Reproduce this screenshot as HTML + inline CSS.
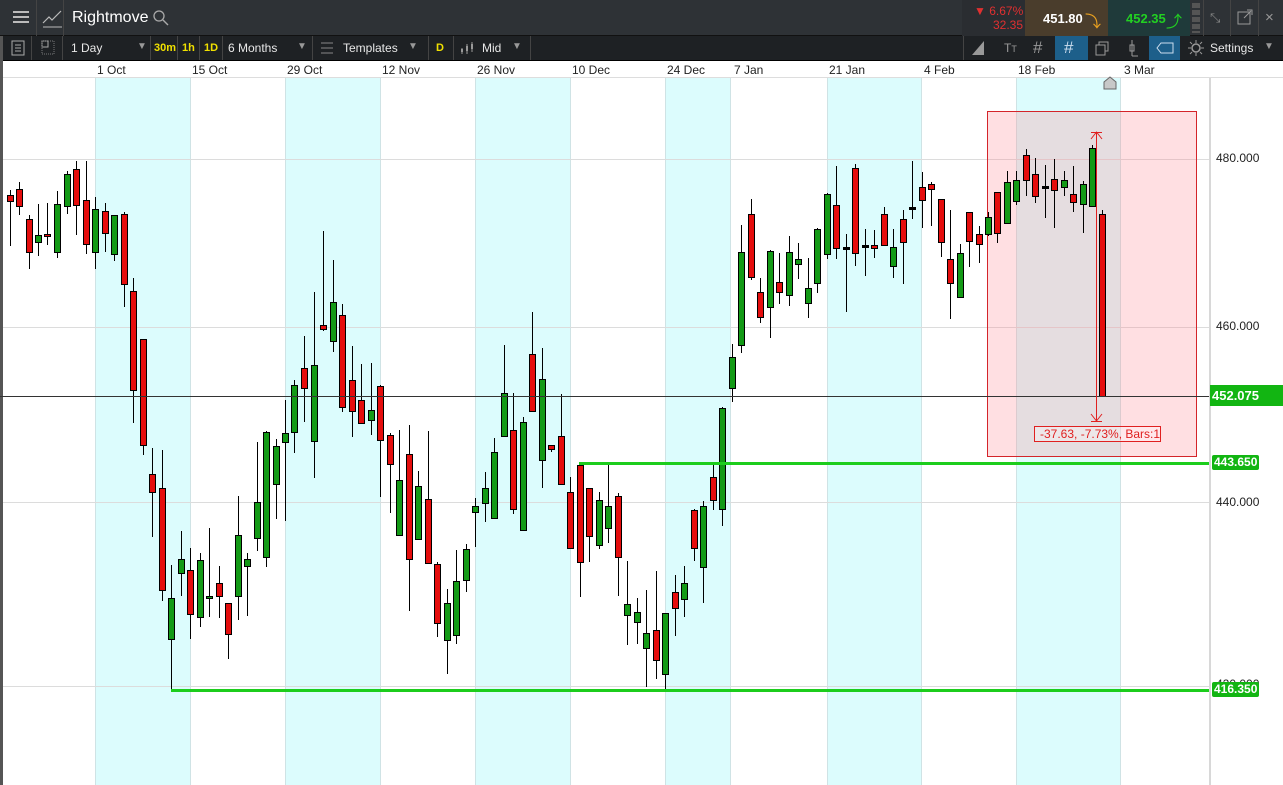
<!DOCTYPE html>
<html><head><meta charset="utf-8"><style>
*{margin:0;padding:0;box-sizing:border-box}
body{width:1283px;height:785px;overflow:hidden;background:#fff;font-family:"Liberation Sans",sans-serif;position:relative}
.top{position:absolute;left:0;top:0;width:1283px;height:36px;background:#2e3236;border-bottom:1px solid #111}
.tb{position:absolute;left:0;top:36px;width:1283px;height:25px;background:#1e2124;border-bottom:1px solid #000}
.t{position:absolute;color:#e8e8e8;font-size:12px;white-space:nowrap}
.y{color:#f0e000;font-weight:bold;font-size:11px}
.sep{position:absolute;width:1px;background:#444}
.dates{position:absolute;left:0;top:61px;width:1283px;height:17px;background:#fff;border-bottom:1px solid #ddd}
.dates span{position:absolute;top:2px;font-size:12px;color:#222}
svg{position:absolute;left:0;top:0}
.lab{position:absolute;color:#fff;font-weight:bold;background:#12b512;font-size:12px;padding:0 2px;border-radius:2px}
.ax{position:absolute;left:1216px;font-size:12px;color:#222}
</style></head><body>
<div class="top">
 <div style="position:absolute;left:13px;top:11px;width:16px;height:2px;background:#bbb;box-shadow:0 5px 0 #bbb,0 10px 0 #bbb"></div>
 <div class="sep" style="left:36px;top:0;height:36px"></div>
 <svg width="30" height="36" style="left:38px"><path d="M5 23 L11 17 L14 20 L23 11" stroke="#bbb" fill="none" stroke-width="1.2"/><path d="M5 27 H24" stroke="#bbb"/></svg>
 <div class="sep" style="left:63px;top:0;height:36px"></div>
 <div class="t" style="left:72px;top:9px;font-size:16px;color:#fff">Rightmove</div>
 <svg width="20" height="36" style="left:151px"><circle cx="8" cy="16" r="5" stroke="#aaa" fill="none" stroke-width="1.3"/><path d="M12 20 L17 25" stroke="#aaa" stroke-width="1.4"/></svg>
 <div style="position:absolute;left:962px;top:0;width:63px;height:36px;background:#2a2d31"></div>
 <div class="t" style="left:974px;top:4px;color:#e03030;font-size:12px">▼ 6.67%</div>
 <div class="t" style="left:993px;top:18px;color:#e03030;font-size:12px">32.35</div>
 <div style="position:absolute;left:1025px;top:0;width:83px;height:36px;background:#4a3d2c"></div>
 <div class="t" style="left:1043px;top:11px;color:#fff;font-weight:bold;font-size:13px">451.80</div>
 <div class="t" style="left:1085px;top:8px;color:#e8a020;font-size:16px">⤵</div>
 <div style="position:absolute;left:1108px;top:0;width:82px;height:36px;background:#1f3a3a"></div>
 <div class="t" style="left:1126px;top:11px;color:#22d022;font-weight:bold;font-size:13px">452.35</div>
 <div class="t" style="left:1166px;top:8px;color:#22d022;font-size:16px">⤴</div>
 <div style="position:absolute;left:1192px;top:3px;width:8px;height:30px;background:repeating-linear-gradient(#555 0 5px,#2e3236 5px 7px)"></div>
 <div class="sep" style="left:1203px;top:0;height:36px"></div>
 <div class="t" style="left:1210px;top:10px;color:#888;font-size:13px">⤡</div>
 <div class="sep" style="left:1230px;top:0;height:36px"></div>
 <svg width="20" height="36" style="left:1236px"><rect x="2" y="12" width="12" height="12" stroke="#999" fill="none"/><path d="M8 18 L15 11 M11 10 H16 V15" stroke="#999" fill="none"/></svg>
 <div class="sep" style="left:1258px;top:0;height:36px"></div>
 <div class="t" style="left:1265px;top:9px;color:#999;font-size:15px">×</div>
</div>
<div class="tb">
 <svg width="20" height="24" style="left:10px"><rect x="2" y="5" width="12" height="14" stroke="#aaa" fill="none"/><path d="M5 9H11M5 12H11M5 15H11" stroke="#aaa"/></svg>
 <div class="sep" style="left:31px;top:0;height:24px"></div>
 <svg width="20" height="24" style="left:40px"><rect x="2" y="5" width="6" height="6" stroke="#aaa" fill="none"/><rect x="2" y="5" width="12" height="13" stroke="#777" fill="none" stroke-dasharray="1 1"/></svg>
 <div class="sep" style="left:62px;top:0;height:24px"></div>
 <div class="t" style="left:71px;top:5px">1 Day</div>
 <div class="t" style="left:137px;top:5px;color:#999;font-size:10px">▼</div>
 <div class="sep" style="left:150px;top:0;height:24px"></div>
 <div class="t y" style="left:154px;top:6px">30m</div>
 <div class="sep" style="left:177px;top:0;height:24px"></div>
 <div class="t y" style="left:182px;top:6px">1h</div>
 <div class="sep" style="left:199px;top:0;height:24px"></div>
 <div class="t y" style="left:204px;top:6px">1D</div>
 <div class="sep" style="left:222px;top:0;height:24px"></div>
 <div class="t" style="left:228px;top:5px">6 Months</div>
 <div class="t" style="left:297px;top:5px;color:#999;font-size:10px">▼</div>
 <div class="sep" style="left:312px;top:0;height:24px"></div>
 <svg width="20" height="24" style="left:318px"><path d="M3 7H15M3 12H15M3 17H15" stroke="#888"/></svg>
 <div class="t" style="left:343px;top:5px">Templates</div>
 <div class="t" style="left:408px;top:5px;color:#999;font-size:10px">▼</div>
 <div class="sep" style="left:428px;top:0;height:24px"></div>
 <div class="t y" style="left:436px;top:6px">D</div>
 <div class="sep" style="left:453px;top:0;height:24px"></div>
 <svg width="22" height="24" style="left:458px"><path d="M4 12V18M9 8V18M14 6V16" stroke="#999"/><rect x="3" y="13" width="2" height="3" fill="#999"/><rect x="8" y="10" width="2" height="5" fill="#999"/><rect x="13" y="8" width="2" height="5" fill="#999"/></svg>
 <div class="t" style="left:482px;top:5px">Mid</div>
 <div class="t" style="left:512px;top:5px;color:#999;font-size:10px">▼</div>
 <div class="sep" style="left:530px;top:0;height:24px"></div>
 <div class="sep" style="left:963px;top:0;height:24px"></div>
 <svg width="20" height="24" style="left:968px"><path d="M4 19H16V5Z" fill="#999"/></svg>
 <div class="t" style="left:1004px;top:5px;color:#999">T<span style="font-size:9px">T</span></div>
 <div class="t" style="left:1033px;top:2px;color:#999;font-size:17px">#</div>
 <div style="position:absolute;left:1055px;top:0;width:33px;height:24px;background:#1d5f8a"></div>
 <div class="t" style="left:1064px;top:2px;color:#cde;font-size:17px">#</div>
 <svg width="20" height="24" style="left:1093px"><rect x="3" y="9" width="9" height="10" stroke="#999" fill="none"/><path d="M6 9V6H15V15H12" stroke="#999" fill="none"/></svg>
 <svg width="20" height="24" style="left:1124px"><path d="M8 4V20M8 20H14" stroke="#999"/><rect x="6" y="9" width="4" height="6" stroke="#999" fill="none"/></svg>
 <div style="position:absolute;left:1149px;top:0;width:31px;height:24px;background:#1d5f8a"></div>
 <svg width="24" height="24" style="left:1153px"><path d="M8 7H20V17H8L4 12Z" stroke="#cde" fill="none"/></svg>
 <svg width="20" height="24" style="left:1186px"><circle cx="10" cy="12" r="4" stroke="#999" fill="none" stroke-width="1.5"/><path d="M10 4V7M10 17V20M2 12H5M15 12H18M4 6L6 8M14 16L16 18M4 18L6 16M14 8L16 6" stroke="#999"/></svg>
 <div class="t" style="left:1210px;top:5px">Settings</div>
 <div class="t" style="left:1264px;top:5px;color:#999;font-size:10px">▼</div>
</div>
<div class="dates">
 <span style="left:97px">1 Oct</span><span style="left:192px">15 Oct</span><span style="left:287px">29 Oct</span><span style="left:382px">12 Nov</span><span style="left:477px">26 Nov</span><span style="left:572px">10 Dec</span><span style="left:667px">24 Dec</span><span style="left:734px">7 Jan</span><span style="left:829px">21 Jan</span><span style="left:924px">4 Feb</span><span style="left:1018px">18 Feb</span><span style="left:1124px">3 Mar</span>
</div>
<svg id="c" width="1283" height="785"></svg>
<div class="ax" style="top:151px">480.000</div>
<div class="ax" style="top:319px">460.000</div>
<div class="ax" style="top:495px">440.000</div>
<div class="ax" style="top:677px">420.000</div>
<div class="lab" style="left:1210px;top:385px;width:73px;height:21px;font-size:13px;line-height:21px;padding-left:2px;border-radius:0">452.075</div>
<div class="lab" style="left:1212px;top:455px;height:15px;line-height:15px">443.650</div>
<div class="lab" style="left:1212px;top:682px;height:15px;line-height:15px">416.350</div>
<script>
var s='';
function r(x,y,w,h,f,e){s+='<rect x="'+x+'" y="'+y+'" width="'+w+'" height="'+h+'" fill="'+f+'"'+(e?' stroke="'+e+'"':'')+'/>';}
function l(x1,y1,x2,y2,c,w){s+='<line x1="'+x1+'" y1="'+y1+'" x2="'+x2+'" y2="'+y2+'" stroke="'+c+'" stroke-width="'+(w||1)+'"/>';}
r(0,78,1210,707,'#fff');
[[95,190],[285,380],[475,570],[665,730],[827,921],[1016,1120]].forEach(b=>r(b[0],78,b[1]-b[0],707,'#dcfcfd'));
[95,190,285,380,475,570,665,730,827,921,1016,1120].forEach(x=>l(x+.5,78,x+.5,785,'#cfe3e5'));
[159,327,502,686].forEach(y=>l(0,y+.5,1210,y+.5,'#dcdcdc'));
r(0,36,3,749,'#555');
r(987.5,111.5,209,345,'rgba(255,140,150,0.28)','#d4242a');
var C=[
[10,195,201,190,246,'r'],[19,189,206,182,215,'r'],[29,219,252,215,269,'r'],[38,235,242,204,256,'g'],[47,234,236,203,245,'r'],[57,204,252,191,258,'g'],[67,174,206,171,214,'g'],[76,169,205,161,235,'r'],[86,200,244,161,254,'r'],[95,209,252,197,269,'g'],[105,211,233,203,252,'r'],[114,215,254,215,261,'g'],[124,214,284,212,307,'r'],[133,291,390,278,423,'r'],[143,339,445,339,455,'r'],[152,474,492,448,537,'r'],[162,488,590,450,601,'r'],[171,598,639,565,690,'g'],[181,559,573,531,596,'g'],[190,570,614,548,639,'r'],[200,560,617,553,627,'g'],[209,596,598,528,617,'g'],[219,583,596,566,618,'r'],[228,603,634,603,659,'r'],[238,535,596,496,620,'g'],[247,559,566,553,616,'g'],[257,502,538,442,551,'g'],[266,432,557,431,567,'g'],[276,446,484,439,519,'g'],[285,433,442,400,521,'g'],
[294,385,432,380,453,'g'],[304,368,388,336,422,'r'],[314,365,441,292,478,'g'],[323,325,329,231,331,'r'],[333,302,341,260,352,'g'],[342,315,407,304,412,'r'],[352,380,411,346,437,'r'],[361,400,423,364,424,'r'],[371,410,420,363,435,'g'],[380,386,440,385,497,'r'],[390,435,464,433,513,'r'],[399,480,535,430,536,'g'],[409,454,559,425,611,'r'],[418,486,539,471,539,'g'],[428,499,563,431,563,'r'],[437,564,623,562,637,'r'],[447,603,640,589,674,'g'],[456,581,635,550,644,'g'],[466,549,580,544,592,'g'],[475,506,512,498,547,'g'],[485,488,503,472,522,'g'],[494,452,518,438,519,'g'],[504,393,436,345,436,'g'],[513,430,509,393,514,'r'],[523,422,530,417,530,'g'],[532,354,411,312,412,'r'],[542,379,460,348,488,'g'],[551,445,449,445,452,'r'],[561,436,484,394,484,'r'],
[570,492,548,477,548,'r'],[580,465,562,465,597,'r'],[589,488,536,488,562,'r'],[599,500,545,492,549,'g'],[608,506,528,465,543,'g'],[618,496,557,493,596,'r'],[627,604,615,561,645,'g'],[637,612,622,598,644,'g'],[646,633,648,590,687,'g'],[656,630,660,571,679,'r'],[665,613,674,613,690,'g'],[675,592,608,575,636,'r'],[684,583,599,566,617,'g'],[694,510,548,509,561,'r'],[703,506,567,501,603,'g'],[713,477,500,465,510,'r'],[722,408,509,407,526,'g'],[732,357,388,344,402,'g'],[741,252,345,225,353,'g'],[751,214,277,199,280,'r'],
[760,292,317,278,323,'r'],[770,251,307,250,338,'g'],[779,282,292,253,304,'r'],[789,252,295,236,306,'g'],[798,259,264,243,279,'g'],[808,288,303,258,318,'g'],[817,229,283,228,293,'g'],[827,194,254,193,259,'g'],[836,205,248,166,259,'r'],[846,247,249,234,312,'k'],[855,168,253,164,266,'r'],[865,245,247,229,276,'k'],[874,245,248,230,258,'r'],[884,214,245,207,245,'r'],[893,247,266,229,278,'g'],[903,219,242,210,284,'r'],[912,207,209,161,219,'k'],[922,187,200,172,228,'r'],[931,184,189,182,226,'r'],[941,199,242,199,257,'r'],[950,259,283,210,319,'r'],[960,253,297,244,297,'g'],[969,212,241,212,267,'r'],[979,234,244,226,263,'r'],[988,217,234,212,236,'g'],[997,192,233,192,243,'r'],[1007,182,223,171,223,'g'],[1016,180,201,171,205,'g'],[1026,155,180,149,196,'r'],[1035,174,196,158,203,'r'],[1045,186,188,165,218,'k'],[1054,179,190,159,228,'r'],[1064,180,187,171,196,'g'],[1073,194,202,166,212,'r'],[1083,184,204,181,233,'g'],[1092,148,206,145,207,'g'],[1102,214,396,210,396,'r']];
C.forEach(c=>{var x=c[0];l(x+.5,c[3],x+.5,c[4],'#000');var f=c[5]=='r'?'#e50d0d':c[5]=='g'?'#139a16':'#000';var h=Math.max(c[2]-c[1],1);r(x-2.5,c[1]+.5,6,h,f,'#000');});
l(0,396.5,1210,396.5,'#333');
l(579,463.5,1210,463.5,'#1ccd1c',3);
l(171,690.5,1210,690.5,'#1ccd1c',3);
l(1096.5,132,1096.5,421,'#e02020');
s+='<path d="M1091 139 L1096.5 132 L1102 139 M1091 414 L1096.5 421 L1102 414 M1091 132.5 H1102 M1091 421.5 H1102" stroke="#e02020" fill="none"/>';
r(1034.5,426.5,126,15,'rgba(255,255,255,0.3)','#e02020');
s+='<text x="1040" y="438" font-size="12" fill="#e02020" font-family="Liberation Sans">-37.63, -7.73%, Bars:1</text>';
s+='<path d="M1104 89 V82 L1110 77 L1116 82 V89Z" fill="#c8c8c8" stroke="#666"/>';
r(1209,78,2,707,'#d8d8d8');
document.getElementById('c').innerHTML=s;
</script>
</body></html>
